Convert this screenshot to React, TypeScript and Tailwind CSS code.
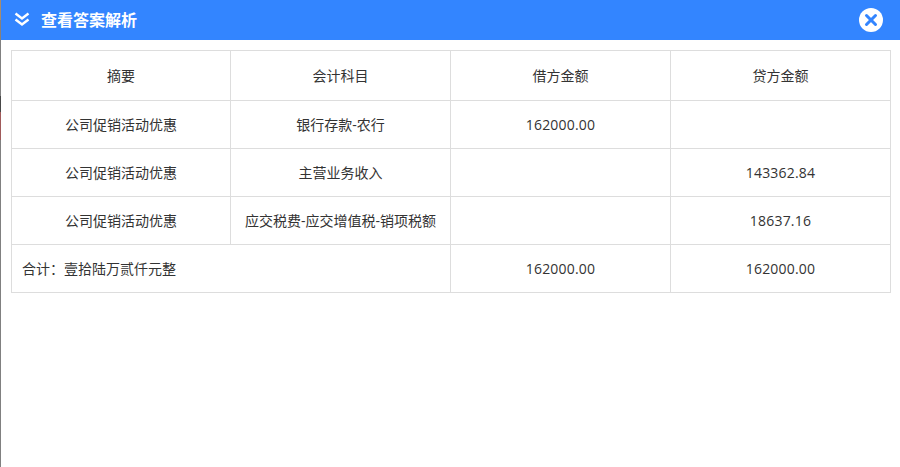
import React from 'react';

const rows = [
  { summary: '公司促销活动优惠', account: '银行存款-农行', debit: '162000.00', credit: '' },
  { summary: '公司促销活动优惠', account: '主营业务收入', debit: '', credit: '143362.84' },
  { summary: '公司促销活动优惠', account: '应交税费-应交增值税-销项税额', debit: '', credit: '18637.16' },
];

const cell = 'border border-[#dddddd] text-center p-0 font-normal';
const money = `${cell} tracking-[0.2px]`;

const App: React.FC = () => {
  return (
    <div className="w-[900px] h-[467px] overflow-hidden bg-white flex text-[14px] text-[#333333] font-['Open_Sans','Noto_Sans_CJK_SC',sans-serif]">
      {/* page behind the dialog, only a sliver is visible */}
      <div className="w-px shrink-0 flex flex-col bg-[#808080]">
        <div className="h-5 bg-[#a88c6c]" />
        <div className="h-5 bg-[#8a8078]" />
        <div className="h-[56px]" />
        <div className="h-4 bg-[#484848]" />
        <div className="h-7 bg-[#a05a5a]" />
      </div>
      <div className="flex-1 flex flex-col">
        <div className="h-10 bg-[#3385ff] flex items-center justify-between pl-[13px] pr-[17px] shrink-0">
          <div className="flex items-center gap-[11px]">
            <svg width="16" height="16" viewBox="0 0 16 16" fill="none" stroke="white" strokeWidth="2.4">
              <path d="M1.5 1.5 8 6.5 14.5 1.5" />
              <path d="M1.5 7.5 8 12.5 14.5 7.5" />
            </svg>
            <span className="text-white text-[16px] font-bold">查看答案解析</span>
          </div>
          <div className="w-6 h-6 rounded-full bg-white flex items-center justify-center">
            <svg width="14" height="14" viewBox="0 0 14 14" fill="none" stroke="#3385ff" strokeWidth="3" strokeLinecap="round">
              <path d="M2.5 2.5 11.5 11.5" />
              <path d="M11.5 2.5 2.5 11.5" />
            </svg>
          </div>
        </div>
        <div className="flex-1 pt-[10px] pl-[10px]">
          <table className="w-[880px] border-collapse table-fixed">
            <colgroup>
              <col className="w-[219px]" />
              <col className="w-[220px]" />
              <col className="w-[220px]" />
              <col className="w-[220px]" />
            </colgroup>
            <thead>
              <tr className="h-[50px]">
                <th className={cell}>摘要</th>
                <th className={cell}>会计科目</th>
                <th className={cell}>借方金额</th>
                <th className={cell}>贷方金额</th>
              </tr>
            </thead>
            <tbody>
              {rows.map((r) => (
                <tr key={r.account} className="h-12">
                  <td className={cell}>{r.summary}</td>
                  <td className={cell}>{r.account}</td>
                  <td className={money}>{r.debit}</td>
                  <td className={money}>{r.credit}</td>
                </tr>
              ))}
              <tr className="h-12">
                <td colSpan={2} className="border border-[#dddddd] text-left pl-[10px]">合计：壹拾陆万贰仟元整</td>
                <td className={money}>162000.00</td>
                <td className={money}>162000.00</td>
              </tr>
            </tbody>
          </table>
        </div>
      </div>
    </div>
  );
};

export default App;
